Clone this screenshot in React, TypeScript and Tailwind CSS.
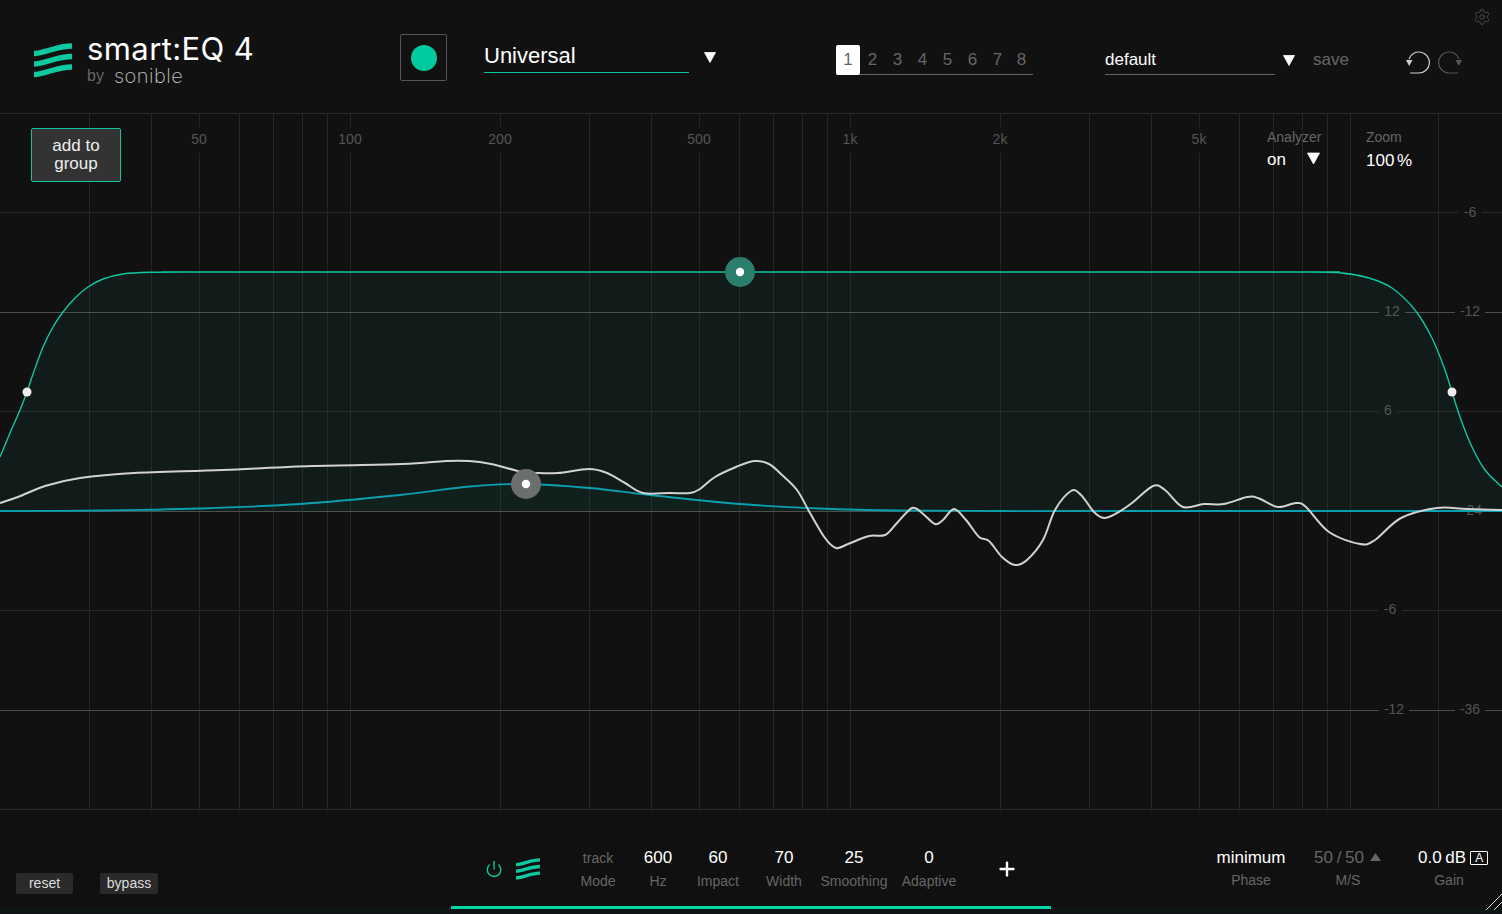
import { Power, Plus, Settings } from 'lucide-react'

const toPath = (pts: number[][]) => {
  // catmull-rom through the points
  let d = `M${pts[0][0]} ${pts[0][1]}`
  for (let i = 0; i < pts.length - 1; i++) {
    const p0 = pts[Math.max(i - 1, 0)]
    const p1 = pts[i]
    const p2 = pts[i + 1]
    const p3 = pts[Math.min(i + 2, pts.length - 1)]
    const c1x = p1[0] + (p2[0] - p0[0]) / 6
    const c1y = p1[1] + (p2[1] - p0[1]) / 6
    const c2x = p2[0] - (p3[0] - p1[0]) / 6
    const c2y = p2[1] - (p3[1] - p1[1]) / 6
    d += ` C${c1x.toFixed(1)} ${c1y.toFixed(1)} ${c2x.toFixed(1)} ${c2y.toFixed(1)} ${p2[0]} ${p2[1]}`
  }
  return d
}

const spectrum = [
  [0, 503], [18, 497], [45, 486], [80, 478], [134, 473], [223, 470], [312, 466], [402, 464], [446, 461], [469, 461],
  [491, 464], [522, 472], [536, 473], [558, 473], [589, 469], [607, 473], [625, 483], [643, 493], [670, 493], [690, 493],
  [700, 489], [715, 477], [736, 467], [754, 461], [769, 464], [782, 475], [797, 490], [810, 513], [825, 538], [836, 548],
  [848, 544], [869, 536], [885, 535], [897, 523], [912, 508], [922, 513], [935, 524], [943, 520], [954, 509], [966, 520],
  [979, 537], [989, 541], [1002, 557], [1015, 565], [1027, 560], [1043, 540], [1055, 510], [1071, 491], [1081, 495],
  [1094, 512], [1104, 518], [1117, 513], [1132, 503], [1153, 486], [1165, 490], [1183, 507], [1204, 504], [1224, 504],
  [1247, 497], [1258, 498], [1278, 507], [1296, 503], [1306, 507], [1329, 532], [1360, 544], [1375, 540], [1401, 518],
  [1437, 508], [1467, 509], [1502, 510],
]

const topCurve = [
  [0, 457], [10, 433], [20, 410], [27, 392], [33, 374], [43, 347], [53, 327], [63, 312], [75, 298], [88, 287], [103, 279],
  [123, 274], [150, 272.3], [200, 272], [250, 272], [1250, 272], [1302, 272], [1342, 273], [1369, 278], [1392, 288], [1415, 310],
  [1432, 338], [1445, 370], [1452, 392], [1460, 417], [1472, 447], [1485, 470], [1502, 487],
]

const bell = [
  [0, 511], [100, 510.5], [200, 508.5], [300, 504], [400, 495], [470, 486.5], [526, 484], [590, 488], [650, 495],
  [740, 504], [820, 508.5], [900, 510.5], [1000, 511], [1100, 511], [1400, 511], [1502, 511],
]

const gridX = [
  89, 151, 199, 239, 273, 302, 327, 350, 500, 589, 651, 699, 739, 773, 802, 827, 850, 1000, 1089, 1151, 1199, 1239, 1273,
  1302, 1327, 1350, 1438,
]

function Waves({ className }: { className: string }) {
  return (
    <svg className={className} viewBox="0 0 38 35" fill="none" stroke="#0cc9a0" strokeWidth="5.4">
      <path d="M0 10.5C11 10.5 22 3 38 3" />
      <path d="M0 21C11 21 22 13.5 38 13.5" />
      <path d="M0 31.5C11 31.5 22 24 38 24" />
    </svg>
  )
}

function Caret({ className }: { className: string }) {
  return (
    <svg className={className} viewBox="0 0 12 11" fill="#fff">
      <path d="M0.5 0.5H11.5L6 10.5Z" strokeLinejoin="round" stroke="#fff" strokeWidth="0.8" />
    </svg>
  )
}

function Curves() {
  return (
    <svg className="absolute inset-0 w-[1502px] h-[801px]" viewBox="0 113 1502 801" fill="none">
      <path d={`${toPath(topCurve)} L1502 511 L0 511 Z`} fill="#0cc9a0" fillOpacity="0.055" stroke="none" />
      <path d={`${toPath(bell)} Z`} fill="#0cc9a0" fillOpacity="0.03" stroke="none" />
      <path d={toPath(topCurve)} stroke="#10c7a0" strokeWidth="1.4" />
      <path d="M0 511.5H1502" stroke="#4d4f4e" strokeWidth="1" />
      <path d={toPath(bell)} stroke="#0a9fae" strokeWidth="1.8" />
      <path d={toPath(spectrum)} stroke="#d2d2d2" strokeWidth="2" />
      <circle cx="740" cy="272" r="15" fill="#2b7d6c" />
      <circle cx="740" cy="272" r="4.2" fill="#fff" />
      <circle cx="526" cy="484" r="15" fill="#6c6f6e" />
      <circle cx="526" cy="484" r="4.2" fill="#fff" />
      <circle cx="27" cy="392" r="4.5" fill="#eee" />
      <circle cx="1452" cy="392" r="4.5" fill="#eee" />
    </svg>
  )
}

function Grid() {
  return (
    <svg className="absolute inset-0 w-[1502px] h-[801px]" viewBox="0 113 1502 801" fill="none">
      {gridX.map((x) => (
        <path key={x} d={`M${x + 0.5} 113V914`} stroke="#262626" />
      ))}
      {[212, 411, 610, 809].map((y) => (
        <path key={y} d={`M0 ${y + 0.5}H1502`} stroke="#2a2a2a" />
      ))}
      {[312, 710].map((y) => (
        <path key={y} d={`M0 ${y + 0.5}H1502`} stroke="#4d4d4d" />
      ))}
    </svg>
  )
}

function Param({ value, label, width, dim }: { value: string; label: string; width: string; dim?: boolean }) {
  return (
    <div className={`${width} flex flex-col items-center`}>
      <span className={`h-[22px] leading-[22px] ${dim ? 'text-sm text-[#666]' : 'text-[17px] text-white'}`}>{value}</span>
      <span className="mt-[1px] h-[22px] leading-[22px] text-sm text-[#666]">{label}</span>
    </div>
  )
}

export default function App() {
  return (
    <div className="relative w-[1502px] h-[914px] overflow-hidden bg-[#111111] font-['Liberation_Sans',sans-serif] text-white">
      <Settings className="absolute right-[11px] top-[8px] w-[18px] h-[18px] text-[#5c5c5c]" strokeWidth={1} />

      {/* Header */}
      <header className="h-[114px] border-b border-[#2a2a2a] flex items-center">
        <div className="ml-[34px] w-[366px] flex items-center">
          <Waves className="w-[38px] h-[35px] mt-[7px]" />
          <div className="ml-[15px] flex flex-col mt-[5px]">
            <span className="h-[30px] leading-[34px] text-[31px] tracking-[0.4px] font-['Inter',sans-serif] font-normal">smart:EQ 4</span>
            <div className="flex items-center h-[20px] mt-[4px]">
              <span className="text-base leading-[20px] text-[#666]">by</span>
              <span className="ml-[10px] text-[20px] leading-[20px] tracking-[0.5px] text-[#c4c4c4] font-['Inter',sans-serif] font-extralight">sonible</span>
            </div>
          </div>
        </div>

        <div className="w-[47px] h-[47px] mt-[2px] border border-[#555] rounded-[2px] flex items-center justify-center">
          <div className="w-[26px] h-[26px] rounded-full bg-[#00c99e]" />
        </div>

        <div className="ml-[37px] w-[205px] h-[34px] border-b border-[#10c7a0] text-[22px] leading-[34px] mt-[-1px]">Universal</div>
        <Caret className="ml-[15px] w-[12px] h-[11px] mt-[2px]" />

        <div className="ml-[120px] w-[197px] h-[30px] mt-[6px] flex border-b border-[#666] text-[17px] leading-[30px] text-[#666]">
          <span className="w-[24px] h-[30px] bg-white rounded-[2px] text-center text-[#666]">1</span>
          <span className="w-[25px] text-center">2</span>
          <span className="w-[25px] text-center">3</span>
          <span className="w-[25px] text-center">4</span>
          <span className="w-[25px] text-center">5</span>
          <span className="w-[25px] text-center">6</span>
          <span className="w-[25px] text-center">7</span>
          <span className="w-[23px] text-center">8</span>
        </div>

        <div className="ml-[72px] w-[170px] h-[30px] mt-[6px] border-b border-[#666] text-[17px] leading-[30px]">default</div>
        <Caret className="ml-[8px] w-[12px] h-[11px] mt-[7px]" />
        <span className="ml-[18px] text-[17px] text-[#666] mt-[7px]">save</span>

        <svg className="ml-[57px] w-[56px] h-[24px] mt-[10px]" viewBox="0 0 56 24" fill="none">
          <path d="M4 23H13A10.5 10.5 0 1 0 3 9" stroke="#cfcfcf" strokeWidth="1.2" />
          <path d="M0 10H6.5L3.2 16Z" fill="#cfcfcf" />
          <path d="M52 23H43A10.5 10.5 0 1 1 53 9" stroke="#555" strokeWidth="1.2" />
          <path d="M49.5 10H56L52.8 16Z" fill="#555" />
        </svg>
      </header>

      {/* Chart */}
      <main className="absolute left-0 top-[113px] w-[1502px] h-[801px]">
        <Grid />

        <button className="absolute left-[31px] top-[15px] w-[90px] h-[54px] bg-[#333333] border border-[#10c7a0] rounded-[2px] text-[17px] leading-[18px] text-[#eee]">
          add to
          <br />
          group
        </button>

        <span className="absolute left-[199px] top-[14px] h-[26px] -translate-x-1/2 bg-[#111111] px-1 text-sm leading-[24px] text-[#555]">50</span>
        <span className="absolute left-[350px] top-[14px] h-[26px] -translate-x-1/2 bg-[#111111] px-1 text-sm leading-[24px] text-[#555]">100</span>
        <span className="absolute left-[500px] top-[14px] h-[26px] -translate-x-1/2 bg-[#111111] px-1 text-sm leading-[24px] text-[#555]">200</span>
        <span className="absolute left-[699px] top-[14px] h-[26px] -translate-x-1/2 bg-[#111111] px-1 text-sm leading-[24px] text-[#555]">500</span>
        <span className="absolute left-[850px] top-[14px] h-[26px] -translate-x-1/2 bg-[#111111] px-1 text-sm leading-[24px] text-[#555]">1k</span>
        <span className="absolute left-[1000px] top-[14px] h-[26px] -translate-x-1/2 bg-[#111111] px-1 text-sm leading-[24px] text-[#555]">2k</span>
        <span className="absolute left-[1199px] top-[14px] h-[26px] -translate-x-1/2 bg-[#111111] px-1 text-sm leading-[24px] text-[#555]">5k</span>

        <div className="absolute left-[1267px] top-[15px] flex flex-col w-[60px]">
          <span className="text-sm leading-[18px] text-[#666]">Analyzer</span>
          <div className="flex items-center mt-[3px]">
            <span className="text-[17px] leading-[22px]">on</span>
            <Caret className="ml-[21px] w-[13px] h-[13px] mt-[-3px]" />
          </div>
        </div>
        <div className="absolute left-[1366px] top-[15px] flex flex-col">
          <span className="text-sm leading-[18px] text-[#666]">Zoom</span>
          <span className="text-[17px] leading-[22px] mt-[4px] [word-spacing:-2px]">100 %</span>
        </div>

        <span className="absolute left-[1470px] top-[89px] w-[24px] -translate-x-1/2 bg-[#111111] text-center text-sm leading-[20px] text-[#555]">-6</span>
        <span className="absolute left-[1470px] top-[188px] w-[30px] -translate-x-1/2 bg-[#111111] text-center text-sm leading-[20px] text-[#555]">-12</span>
        <span className="absolute left-[1392px] top-[188px] w-[26px] -translate-x-1/2 bg-[#111111] text-center text-sm leading-[20px] text-[#555]">12</span>
        <span className="absolute left-[1388px] top-[287px] w-[18px] -translate-x-1/2 bg-[#111111] text-center text-sm leading-[20px] text-[#555]">6</span>
        <span className="absolute left-[1472px] top-[387px] w-[24px] -translate-x-1/2 text-center text-sm leading-[20px] text-[#555]">-24</span>
        <span className="absolute left-[1390px] top-[486px] w-[24px] -translate-x-1/2 bg-[#111111] text-center text-sm leading-[20px] text-[#555]">-6</span>
        <span className="absolute left-[1394px] top-[586px] w-[30px] -translate-x-1/2 bg-[#111111] text-center text-sm leading-[20px] text-[#555]">-12</span>
        <span className="absolute left-[1470px] top-[586px] w-[30px] -translate-x-1/2 bg-[#111111] text-center text-sm leading-[20px] text-[#555]">-36</span>

        <Curves />
      </main>

      {/* Bottom controls */}
      <footer className="absolute left-0 bottom-0 w-[1502px] h-[104px] bg-[#111111]/90 flex">
        <div className="absolute left-0 bottom-0 w-[1502px] h-[5px] bg-[#0f1416]" />
        <div className="w-[451px] flex items-start pt-[63px] pl-[16px] gap-[27px] text-sm text-[#ddd]">
          <button className="w-[57px] h-[21px] bg-[#2a2a2a] rounded-[2px] leading-[21px]">reset</button>
          <button className="w-[58px] h-[21px] bg-[#2a2a2a] rounded-[2px] leading-[21px]">bypass</button>
        </div>

        <div className="w-[600px] h-[99px] border-b-[3px] border-[#00d6a3] flex pt-[37px]">
          <div className="w-[117px] h-[44px] flex items-center pl-[34px]">
            <Power className="w-[18px] h-[18px] text-[#0cc9a0]" strokeWidth={1.8} />
            <Waves className="ml-[13px] w-[24px] h-[22px]" />
          </div>
          <Param value="track" label="Mode" width="w-[60px]" dim />
          <Param value="600" label="Hz" width="w-[60px]" />
          <Param value="60" label="Impact" width="w-[60px]" />
          <Param value="70" label="Width" width="w-[72px]" />
          <Param value="25" label="Smoothing" width="w-[68px]" />
          <Param value="0" label="Adaptive" width="w-[82px]" />
          <div className="h-[44px] flex items-center ml-[26px]">
            <Plus className="w-[22px] h-[22px] text-white" strokeWidth={2.6} />
          </div>
        </div>

        <div className="flex-1 flex pt-[37px] relative">
          <div className="ml-[160px] w-[80px] flex flex-col items-center">
            <span className="h-[22px] leading-[22px] text-[17px]">minimum</span>
            <span className="h-[22px] leading-[22px] text-sm text-[#666]">Phase</span>
          </div>
          <div className="ml-[23px] w-[90px] flex flex-col">
            <div className="h-[22px] flex items-center text-[17px] text-[#666] [word-spacing:-1px]">
              50 / 50
              <svg className="ml-[6px] w-[11px] h-[8px] mt-[-2px]" viewBox="0 0 11 8" fill="#666">
                <path d="M5.5 0L11 8H0Z" />
              </svg>
            </div>
            <span className="h-[22px] leading-[22px] text-sm text-[#666] w-[68px] text-center">M/S</span>
          </div>
          <div className="ml-[14px] flex flex-col">
            <div className="h-[22px] flex items-center text-[17px] [word-spacing:-1px]">
              0.0 dB
              <span className="ml-[4px] w-[18px] h-[14px] border border-white rounded-[1px] text-xs leading-[12px] text-center">A</span>
            </div>
            <span className="h-[22px] leading-[22px] text-sm text-[#666] w-[62px] text-center">Gain</span>
          </div>
          <svg className="absolute right-0 bottom-[4px] w-[16px] h-[16px]" viewBox="0 0 16 16" fill="none" stroke="#ddd" strokeWidth="1">
            <path d="M0 16L16 0M8 16L16 8" />
          </svg>
        </div>
      </footer>
    </div>
  )
}
